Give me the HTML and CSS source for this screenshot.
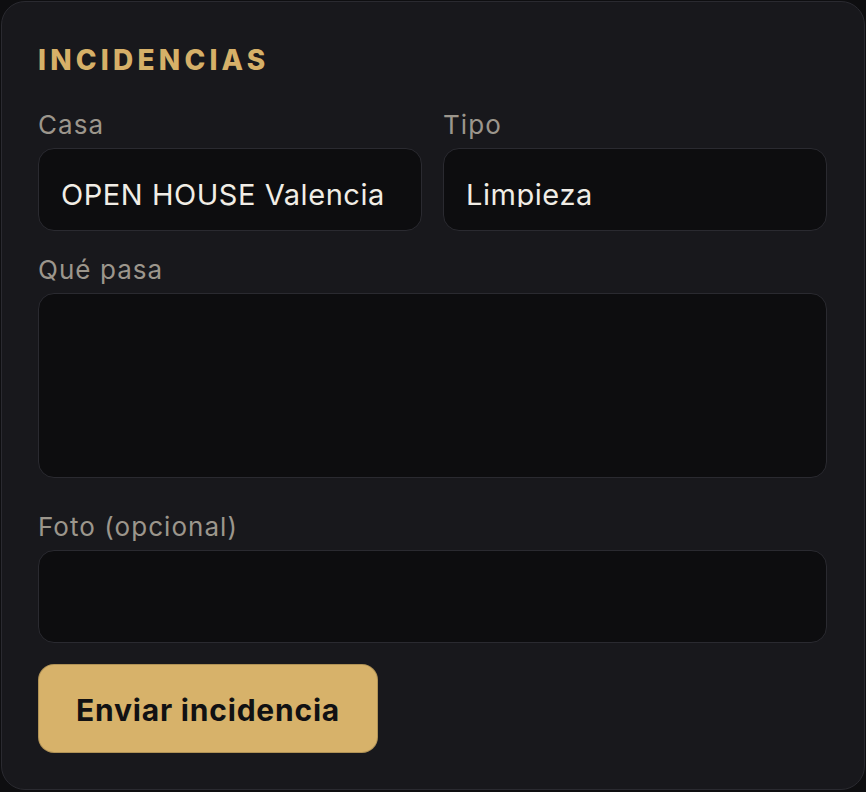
FILE: index.html
```html
<!DOCTYPE html>
<html lang="es">
<head>
<meta charset="utf-8">
<title>Incidencias</title>
<link rel="stylesheet" href="styles.css">
</head>
<body>
<main class="card">
  <h2 class="title">INCIDENCIAS</h2>
  <div class="row">
    <div class="field">
      <label class="label">Casa</label>
      <div class="control"><span class="value">OPEN HOUSE Valencia</span></div>
    </div>
    <div class="field">
      <label class="label">Tipo</label>
      <div class="control"><span class="value">Limpieza</span></div>
    </div>
  </div>
  <div class="field field-area">
    <label class="label">Qué pasa</label>
    <div class="area"></div>
  </div>
  <div class="field field-file">
    <label class="label">Foto (opcional)</label>
    <div class="file"></div>
  </div>
  <div class="actions">
    <button class="submit" type="button">Enviar incidencia</button>
  </div>
</main>
</body>
</html>
```

FILE: styles.css
```css
* { box-sizing: border-box; }
html, body { height: 100%; }
body {
  margin: 0;
  padding: 1px 1px 2px 1px;
  background: #0e0e10;
  font-family: Inter, "Noto Sans", sans-serif;
}
.card {
  height: 789px;
  background: #18181c;
  border: 1px solid #2a2a30;
  border-radius: 24px;
  padding: 41px 37px 0 36px;
  display: flex;
  flex-direction: column;
}
.title {
  margin: 0 0 33px;
  font-size: 28px;
  line-height: 34px;
  font-weight: 800;
  letter-spacing: 4.2px;
  color: #d6b068;
}
.row {
  display: grid;
  grid-template-columns: 1fr 1fr;
  column-gap: 21px;
}
.field { display: flex; flex-direction: column; }
.label {
  display: block;
  font-size: 26px;
  line-height: 30px;
  letter-spacing: 1.05px;
  color: #9c968c;
  margin-bottom: 8px;
}
.control, .area, .file {
  background: #0d0d0f;
  border: 1px solid #2a2a30;
  border-radius: 16px;
}
.control {
  height: 83px;
  padding: 23px 22px 0;
}
.value {
  display: block;
  height: 35px;
  overflow: hidden;
  white-space: nowrap;
  font-size: 29px;
  line-height: 46px;
  letter-spacing: 0.55px;
  color: #f1ede6;
}
.field-area { margin-top: 24px; }
.area { height: 185px; }
.field-file { margin-top: 34px; }
.file { height: 93px; }
.actions { margin-top: 21px; display: flex; }
.submit {
  height: 89px;
  padding: 3px 37px 0;
  border: 1px solid rgba(0,0,0,0.18);
  border-radius: 16px;
  background: #d7b26a;
  color: #111113;
  font-family: Inter, "Noto Sans", sans-serif;
  font-size: 30px;
  line-height: 84px;
  font-weight: 700;
  letter-spacing: 0.8px;
  cursor: pointer;
}
```
